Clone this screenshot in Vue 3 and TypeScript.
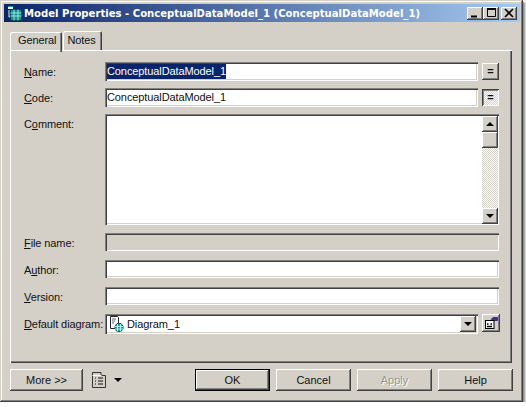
<script setup lang="ts">
import { ref } from "vue";

const activeTab = ref("General");
const tabs = ["General", "Notes"];
const name = "ConceptualDataModel_1";
</script>

<template>
  <div class="dialog">
    <div class="titlebar">
      <svg class="app-icon" width="16" height="16" viewBox="0 0 16 16">
        <path d="M3 5v7h3" stroke="#cfe" fill="none" />
        <rect x="1.5" y="0.5" width="6" height="4" fill="#dff" stroke="#124" />
        <path d="M2 1.5h5" stroke="#1a9a9a" />
        <rect x="4.5" y="4.5" width="11" height="11" fill="#128f8f" stroke="#063c44" />
        <path d="M4.5 8h11M4.5 11h11M8 4.5v11M12 4.5v11" stroke="#8fe6dc" fill="none" />
      </svg>
      <span class="title">Model Properties - {{ name }} ({{ name }})</span>
      <div class="caption-buttons">
        <button class="caption-btn">
          <svg width="10" height="10" viewBox="0 0 10 10"><path d="M1 8.5h6" stroke="#000" stroke-width="2" /></svg>
        </button>
        <button class="caption-btn">
          <svg width="11" height="10" viewBox="0 0 11 10"><path d="M1.5 1.5h8v7h-8z" stroke="#000" fill="none" /><path d="M1 1h9" stroke="#000" stroke-width="2" /></svg>
        </button>
        <button class="caption-btn close">
          <svg width="10" height="10" viewBox="0 0 10 10"><path d="M1 1l8 8M9 1l-8 8" stroke="#000" stroke-width="1.6" /></svg>
        </button>
      </div>
    </div>

    <div class="tabs">
      <div
        v-for="tab in tabs"
        :key="tab"
        class="tab"
        :class="{ active: tab === activeTab }"
        @click="activeTab = tab"
      >
        {{ tab }}
      </div>
    </div>

    <div class="panel">
      <div class="row">
        <label class="label"><u>N</u>ame:</label>
        <div class="field sunken"><span class="selected">{{ name }}</span></div>
        <button class="mini raised">=</button>
      </div>
      <div class="row">
        <label class="label"><u>C</u>ode:</label>
        <div class="field sunken">{{ name }}</div>
        <button class="mini pressed">=</button>
      </div>
      <div class="row comment-row">
        <label class="label">C<u>o</u>mment:</label>
        <div class="comment sunken">
          <div class="scrollbar">
            <button class="scroll-btn raised"><i class="arrow up"></i></button>
            <div class="thumb raised"></div>
            <div class="track"></div>
            <button class="scroll-btn raised"><i class="arrow down"></i></button>
          </div>
        </div>
      </div>
      <div class="row wide file-row">
        <label class="label"><u>F</u>ile name:</label>
        <div class="field short sunken disabled"></div>
      </div>
      <div class="row wide spaced">
        <label class="label">A<u>u</u>thor:</label>
        <div class="field short sunken"></div>
      </div>
      <div class="row wide spaced">
        <label class="label"><u>V</u>ersion:</label>
        <div class="field short sunken"></div>
      </div>
      <div class="row spaced diagram-row">
        <label class="label"><u>D</u>efault diagram:</label>
        <div class="combo sunken">
          <svg class="diagram-icon" width="15" height="16" viewBox="0 0 15 16">
            <path d="M1.5 .5h7l1 1v11h-8z" fill="#fff" stroke="#222" />
            <path d="M3 3h4M3 5h3M3 7h2" stroke="#567" />
            <path d="M6 10l2-2.500h4l2 2.500v3l-2 2.500h-4l-2-2.500z" fill="#1aa3a3" stroke="#0b5c5c" />
            <path d="M6 10.500h8M6 13h8M8.500 8v7.500M11.500 8v7.500" stroke="#aee" />
          </svg>
          <span class="combo-text">Diagram_1</span>
          <button class="combo-btn raised"><i class="arrow down"></i></button>
        </div>
        <button class="mini raised prop-btn">
          <svg width="14" height="13" viewBox="0 0 14 13">
            <path d="M7 2.500l2-2h4.500v3h-4" fill="#34348c" stroke="#34348c" />
            <rect x="1.500" y="3.500" width="8.500" height="8" fill="#fff" stroke="#000" />
            <path d="M3 7h1.500M6.500 7H8M3 9.500h5" stroke="#000" stroke-width="1.400" />
          </svg>
        </button>
      </div>
    </div>

    <div class="footer">
      <button class="btn raised more">More &gt;&gt;</button>
      <svg class="list-icon" width="14" height="16" viewBox="0 0 14 16">
        <path d="M.5 15.500v-15h8.500v3h4.500v12z" fill="#d4d0c8" stroke="#333" />
        <path d="M.5 3.500h9" stroke="#fff" />
        <path d="M3 6h1M6 6h5M3 9h1M6 9h5M3 12h1M6 12h5" stroke="#111" />
      </svg>
      <i class="arrow down list-arrow"></i>
      <div class="spacer"></div>
      <button class="btn default">OK</button>
      <button class="btn raised">Cancel</button>
      <button class="btn raised off">Apply</button>
      <button class="btn raised">Help</button>
    </div>
  </div>
</template>

<style scoped>
.dialog {
  width: 523px;
  height: 402px;
  box-sizing: border-box;
  padding: 4px 10px 0;
  background: #d4d0c8;
  font: 11px "Liberation Sans", Arial, sans-serif;
  letter-spacing: -0.1px;
  color: #111;
  overflow: hidden;
  box-shadow:
    inset -1px -1px #404040,
    inset 1px 1px #d4d0c8,
    inset -2px -2px #808080,
    inset 2px 2px #fff,
    2px 2px 2px #888;
}

button {
  padding: 0;
  border: 0;
  font: inherit;
  color: inherit;
  background: #d4d0c8;
}

.raised {
  box-shadow:
    inset -1px -1px #404040,
    inset 1px 1px #fff,
    inset -2px -2px #808080;
}

.sunken {
  box-shadow:
    inset 1px 1px #808080,
    inset 2px 2px #404040,
    inset -1px -1px #fff,
    inset -2px -2px #d4d0c8;
}

.titlebar {
  display: flex;
  align-items: center;
  height: 18px;
  margin: 0 -7px 0 -6px;
  padding: 0 3px 0 2px;
  background: linear-gradient(90deg, #0a246a, #a6caf0);
  color: #fff;
}

.app-icon {
  flex: none;
  margin-right: 2px;
}

.title {
  flex: 1;
  font: bold 10.1px "DejaVu Sans", sans-serif;
  letter-spacing: 0;
  white-space: nowrap;
}

.caption-buttons {
  display: flex;
}

.caption-btn {
  display: flex;
  align-items: center;
  justify-content: center;
  width: 16px;
  height: 13px;
  box-shadow:
    inset -1px -1px #404040,
    inset 1px 1px #fff,
    inset -2px -2px #808080;
}

.close {
  margin-left: 2px;
}

.tabs {
  display: flex;
  align-items: flex-end;
  height: 20px;
  margin-top: 8px;
}

.tab {
  height: 17px;
  border-radius: 2px 2px 0 0;
  line-height: 15px;
  box-shadow:
    inset 1px 1px #fff,
    inset -1px 0 #404040,
    inset -2px 0 #808080;
}

.tab.active {
  position: relative;
  z-index: 1;
  height: 20px;
  margin-bottom: -2px;
  padding: 0 6px 0 8px;
  line-height: 17px;
}

.tab:not(.active) {
  margin-left: 1px;
  padding: 2px 6px 0 4px;
}

.panel {
  display: flex;
  flex-direction: column;
  gap: 7px;
  box-sizing: border-box;
  width: 502px;
  height: 313px;
  padding: 12px 0 0 14px;
  box-shadow:
    inset 1px 1px #fff,
    inset -1px -1px #404040,
    inset -2px -2px #808080;
}

.row {
  display: flex;
  align-items: flex-start;
}

.label {
  flex: none;
  width: 81px;
  height: 19px;
  line-height: 21px;
  white-space: nowrap;
}

.field {
  box-sizing: border-box;
  width: 373px;
  height: 19px;
  padding: 2px 2px 0;
  background: #fff;
  line-height: 15px;
  white-space: nowrap;
}

.field.short {
  width: 394px;
  height: 18px;
}

.field.disabled {
  background: #d4d0c8;
}

.selected {
  display: inline-block;
  background: #0a246a;
  color: #fff;
}

.mini {
  flex: none;
  display: flex;
  align-items: center;
  justify-content: center;
  width: 17px;
  height: 17px;
  margin: 1px 0 0 4px;
  font-weight: 700;
  line-height: 1;
}

.pressed {
  background: repeating-conic-gradient(#fff 0 25%, #d4d0c8 0 50%) 0 0 / 2px 2px;
  box-shadow:
    inset 1px 1px #404040,
    inset -1px -1px #fff,
    inset 2px 2px #808080;
}

.comment {
  position: relative;
  box-sizing: border-box;
  width: 394px;
  height: 111px;
  background: #fff;
}

.scrollbar {
  position: absolute;
  top: 2px;
  right: 1px;
  bottom: 1px;
  width: 16px;
  display: flex;
  flex-direction: column;
}

.scroll-btn {
  display: flex;
  flex: none;
  align-items: center;
  justify-content: center;
  height: 16px;
}

.thumb {
  flex: none;
  height: 16px;
  background: #d4d0c8;
}

.track {
  flex: 1;
  background: repeating-conic-gradient(#fff 0 25%, #d4d0c8 0 50%) 0 0 / 2px 2px;
}

.arrow {
  display: block;
  width: 0;
  height: 0;
  border-left: 4px solid transparent;
  border-right: 4px solid transparent;
}

.arrow.up {
  border-bottom: 4px solid #000;
}

.arrow.down {
  border-top: 4px solid #000;
}

.file-row {
  margin-top: 1px;
}

.spaced {
  margin-top: 1px;
}

.combo {
  position: relative;
  display: flex;
  align-items: center;
  box-sizing: border-box;
  width: 373px;
  height: 20px;
  padding-left: 4px;
  background: #fff;
}

.combo-text {
  margin-left: 3px;
}

.combo-btn {
  display: flex;
  align-items: center;
  justify-content: center;
  width: 16px;
  height: 16px;
  margin-left: auto;
  margin-right: 2px;
}

.prop-btn {
  width: 18px;
  height: 18px;
  margin-top: 0;
}

.footer {
  display: flex;
  align-items: center;
  height: 22px;
  margin-top: 6px;
}

.btn {
  box-sizing: border-box;
  width: 75px;
  height: 22px;
  margin-left: 6px;
}

.btn.more {
  width: 73px;
  margin-left: 0;
}

.btn.default {
  margin-left: 0;
  box-shadow:
    inset 0 0 0 1px #000,
    inset -2px -2px #404040,
    inset 2px 2px #fff,
    inset -3px -3px #808080;
}

.btn.off {
  color: #9a968e;
  text-shadow: 1px 1px #fff;
}

.list-icon {
  flex: none;
  margin-left: 9px;
}

.list-arrow {
  margin-left: 8px;
}

.spacer {
  flex: 1;
}
</style>

<style>
body {
  background: #fff;
}
</style>
